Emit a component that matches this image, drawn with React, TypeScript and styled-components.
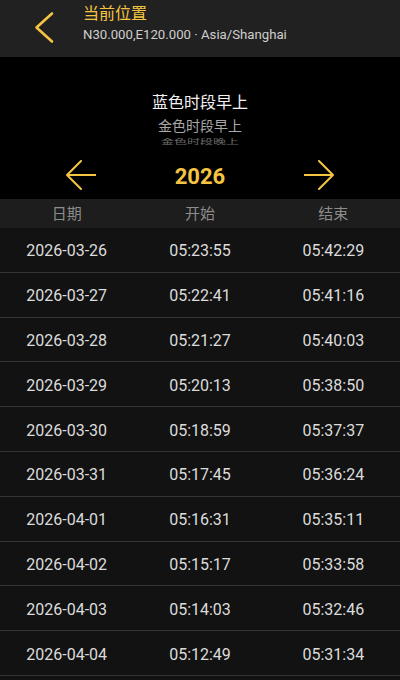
import React from "react";
import styled, { createGlobalStyle } from "styled-components";

const GlobalStyle = createGlobalStyle`
  html, body { margin: 0; padding: 0; background: #121212; }
  body { font-family: Roboto, "Noto Sans CJK SC", sans-serif; }
  * { box-sizing: border-box; }
`;

const YELLOW = "#f5c542";

const Page = styled.div`
  width: 400px;
  height: 680px;
  overflow: hidden;
  background: #121212;
  display: flex;
  flex-direction: column;
`;

const Header = styled.header`
  height: 57px;
  background: #212121;
  display: flex;
  align-items: center;
  padding-left: 33px;
  gap: 26px;
`;

const BackButton = styled.button`
  width: 24px;
  height: 36px;
  padding: 0;
  border: 0;
  background: transparent;
  display: flex;
  align-items: center;
  justify-content: center;
  margin-top: -2px;
`;

const HeaderText = styled.div`
  display: flex;
  flex-direction: column;
  align-self: flex-start;
  padding-top: 1px;
`;

const Title = styled.div`
  color: ${YELLOW};
  font-size: 16px;
  line-height: 22px;
  font-family: "Noto Sans CJK SC", sans-serif;
`;

const Subtitle = styled.div`
  color: #cfcfcf;
  font-size: 13.2px;
  line-height: 18px;
  margin-top: 3px;
`;

const Picker = styled.div`
  height: 89px;
  background: #000;
  overflow: hidden;
  display: flex;
  flex-direction: column;
  align-items: center;
  padding-top: 32px;
`;

const PickerItem = styled.div<{ $level: number }>`
  height: ${(p) => (p.$level === 2 ? 14 : 24)}px;
  line-height: ${(p) => (p.$level === 2 ? 14 : 24)}px;
  font-family: "Noto Sans CJK SC", sans-serif;
  font-size: ${(p) => (p.$level === 0 ? 16 : p.$level === 1 ? 14 : 13)}px;
  color: ${(p) => (p.$level === 0 ? "#f2f2f2" : p.$level === 1 ? "#a8a8a8" : "#6a6a6a")};
  transform: ${(p) => (p.$level === 2 ? "scaleY(0.55)" : "none")};
  transform-origin: center top;
  white-space: nowrap;
`;

const YearBar = styled.div`
  height: 53px;
  background: #000;
  display: flex;
  align-items: center;
  justify-content: space-between;
  padding: 4px 66px 0;
`;

const ArrowButton = styled.button`
  width: 30px;
  height: 30px;
  padding: 0;
  border: 0;
  background: transparent;
  display: flex;
`;

const Year = styled.div`
  color: ${YELLOW};
  font-size: 22px;
  font-weight: 700;
  line-height: 28px;
  margin-top: 5px;
`;

const TableHead = styled.div`
  height: 29px;
  background: #1d1d1d;
  display: grid;
  grid-template-columns: repeat(3, 1fr);
  align-items: center;
`;

const HeadCell = styled.div`
  text-align: center;
  color: #8c8c8c;
  font-size: 15px;
  font-family: "Noto Sans CJK SC", sans-serif;
  line-height: 20px;
  margin-top: -2px;
`;

const Row = styled.div`
  height: 44.8px;
  border-bottom: 1px solid #343434;
  display: grid;
  grid-template-columns: repeat(3, 1fr);
  align-items: center;
  background: #121212;
`;

const Cell = styled.div`
  text-align: center;
  color: #dcdcdc;
  font-size: 16px;
  line-height: 20px;
  margin-top: 3px;
`;

const rows = [
  ["2026-03-26", "05:23:55", "05:42:29"],
  ["2026-03-27", "05:22:41", "05:41:16"],
  ["2026-03-28", "05:21:27", "05:40:03"],
  ["2026-03-29", "05:20:13", "05:38:50"],
  ["2026-03-30", "05:18:59", "05:37:37"],
  ["2026-03-31", "05:17:45", "05:36:24"],
  ["2026-04-01", "05:16:31", "05:35:11"],
  ["2026-04-02", "05:15:17", "05:33:58"],
  ["2026-04-03", "05:14:03", "05:32:46"],
  ["2026-04-04", "05:12:49", "05:31:34"],
];

export default function App() {
  return (
    <Page>
      <GlobalStyle />
      <Header>
        <BackButton aria-label="back">
          <svg width="24" height="36" viewBox="0 0 24 36">
            <polyline
              points="19,3.5 3.5,17.5 19,31.5"
              fill="none"
              stroke={YELLOW}
              strokeWidth="2.6"
              strokeLinecap="round"
              strokeLinejoin="round"
            />
          </svg>
        </BackButton>
        <HeaderText>
          <Title>当前位置</Title>
          <Subtitle>N30.000,E120.000 · Asia/Shanghai</Subtitle>
        </HeaderText>
      </Header>
      <Picker>
        <PickerItem $level={0}>蓝色时段早上</PickerItem>
        <PickerItem $level={1}>金色时段早上</PickerItem>
        <PickerItem $level={2}>金色时段晚上</PickerItem>
      </Picker>
      <YearBar>
        <ArrowButton aria-label="previous year">
          <svg width="30" height="30" viewBox="0 0 30 30">
            <path
              d="M29.5 15 H1 M15 1 L1 15 L15 29"
              fill="none"
              stroke={YELLOW}
              strokeWidth="2"
              strokeLinecap="round"
              strokeLinejoin="round"
            />
          </svg>
        </ArrowButton>
        <Year>2026</Year>
        <ArrowButton aria-label="next year">
          <svg width="30" height="30" viewBox="0 0 30 30">
            <path
              d="M0.5 15 H29 M15 1 L29 15 L15 29"
              fill="none"
              stroke={YELLOW}
              strokeWidth="2"
              strokeLinecap="round"
              strokeLinejoin="round"
            />
          </svg>
        </ArrowButton>
      </YearBar>
      <TableHead>
        <HeadCell>日期</HeadCell>
        <HeadCell>开始</HeadCell>
        <HeadCell>结束</HeadCell>
      </TableHead>
      {rows.map((r) => (
        <Row key={r[0]}>
          <Cell>{r[0]}</Cell>
          <Cell>{r[1]}</Cell>
          <Cell>{r[2]}</Cell>
        </Row>
      ))}
    </Page>
  );
}
